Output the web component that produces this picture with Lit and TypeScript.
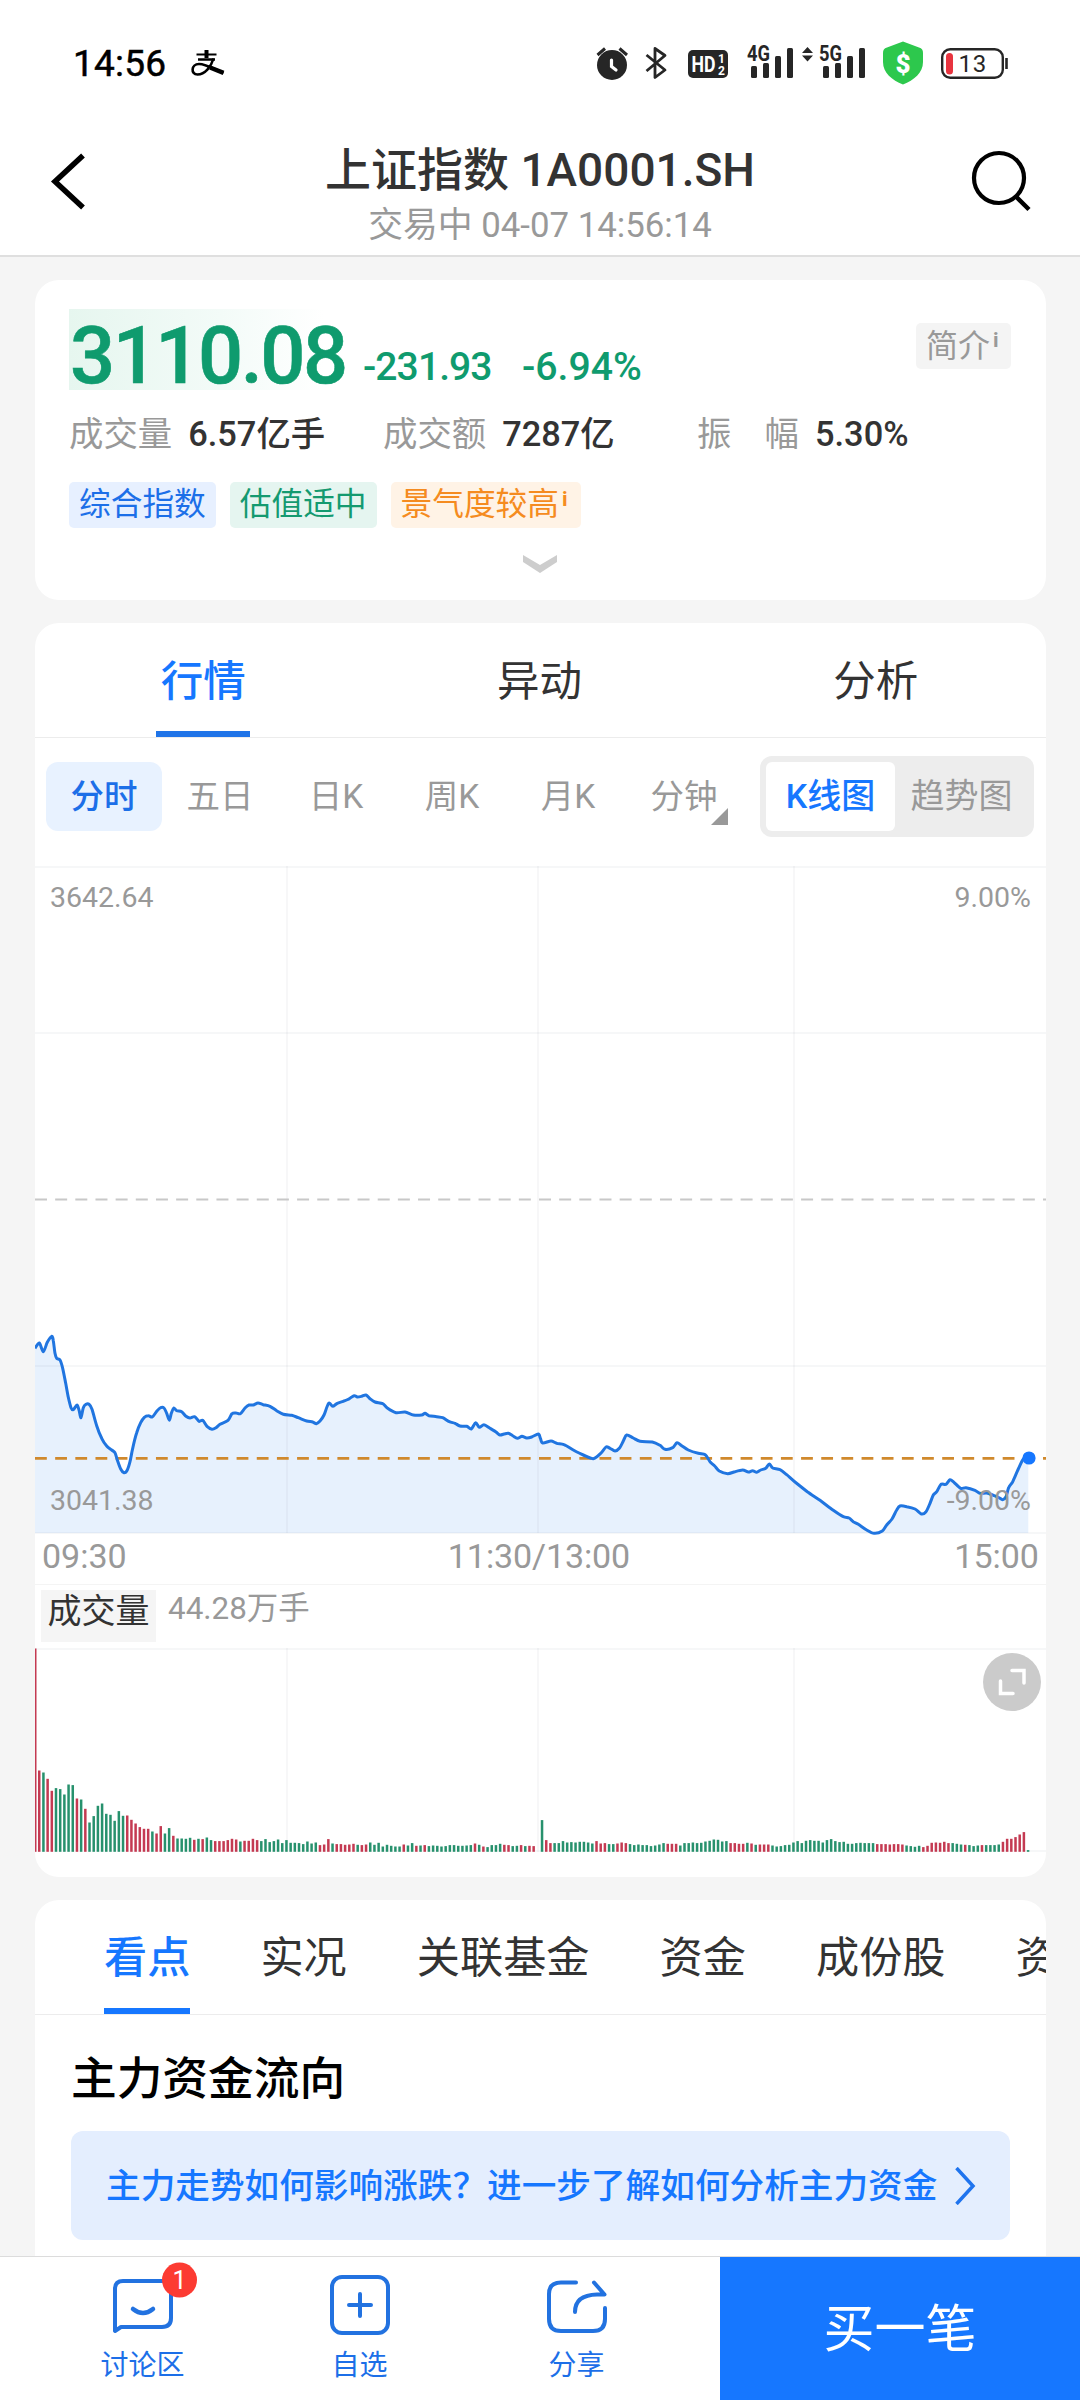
import { LitElement, html, svg, css } from "lit";
import { customElement } from "lit/decorators.js";
import { classMap } from "lit/directives/class-map.js";

const CHART_W = 1011;
const CHART_H = 667;

// Intraday price samples, three units per pixel, x then y.
const PRICE = `105,115 118,99 130,125 142,97 155,79 160,92 165,130 170,145 180,150 188,175 197,220 205,262 213,293 220,299 231,285 237,300 243,323 250,293 258,283 267,283 276,298 290,347 305,385 320,408 335,420 345,428 352,450 362,477 372,488 382,480 390,455 398,415 410,368 422,338 433,322 445,317 457,321 470,304 482,293 492,294 500,310 508,331 514,310 521,294 530,302 545,305 558,319 570,324 584,320 597,334 608,331 622,350 636,358 648,353 660,343 684,331 696,311 708,309 721,311 735,294 747,285 760,285 774,279 790,284 810,289 830,302 850,313 875,316 895,323 920,333 938,336 949,341 960,333 972,315 986,280 998,289 1012,280 1030,274 1045,268 1062,257 1072,261 1085,259
1098,255 1110,266 1125,276 1148,281 1162,294 1188,308 1215,306 1240,315 1265,315 1275,310 1287,317 1310,320 1328,323 1348,335 1365,340 1380,348 1400,349 1414,357 1427,338 1438,352 1452,344 1470,355 1488,366 1500,375 1512,372 1525,370 1538,377 1552,385 1566,379 1580,384 1595,381 1615,372 1621,384 1628,399 1653,393 1670,400 1692,404 1720,420 1750,435 1780,446 1802,430 1818,411 1830,415 1845,423 1858,415 1870,393 1880,375 1900,384 1920,394 1957,396 1980,406 1995,418 2018,413 2031,398 2045,407 2065,420 2095,430 2116,434 2130,455 2144,468 2158,483
2183,491 2205,485 2228,480 2245,486 2258,482 2270,487 2282,480 2297,475 2308,462 2318,474 2340,479 2360,494 2385,516 2422,545 2460,571 2500,601 2530,620 2547,624 2560,635 2575,643 2600,660 2622,670 2647,663 2660,645 2676,627 2690,600 2700,588 2720,590 2745,597 2764,612 2778,605 2790,580 2800,555 2810,545 2823,523 2838,523 2850,509 2862,517 2882,535 2898,533 2925,541 2940,550 2960,549 2980,556 2995,562 3008,569 3018,560 3026,533 3038,515 3055,477 3070,447 3085,443`
  .split(/\s+/)
  .map((p) => p.split(",").map(Number))
  .map(([x, y]) => [x / 3 - 35, y / 3 + 444]);

// Per-minute volume: direction letter followed by the bar size (three units per pixel).
const VOLUME = `R610 R244 G238 R219 R183 G191 G188 G172 G202 G200 R160 G157 R129 G88 G107 G138 G145 G114 G111 G93 G122 G108 R109 R96 R85 R74 R69 R69 G61 R55 R77 G55 G71 R48 G40 G40 G39 G42 R36 G39 R38 G43 G35 R32 R32 R32 R35 R39 R37 G31 R33 R33 R39 R35 G32 G38 G29 G32 G37 G26
G35 G27 G27 G26 G23 G31 G25 G28 R20 R22 R38 G25 R23 R23 R21 R22 R24 G21 R20 R22 G28 G21 G27 G16 G21 G18 G16 G16 R22 G19 G26 R18 G19 R20 G17 G19 G18 G16 G17 G20 G20 G18 G18 G19 G20 R25 G21 R16 G14 G20 G20 G24 R21 R20 G17 G18 R20 G17 R18 R17
G0 G95 R35 R26 G26 G26 G32 G28 G29 G28 G30 G30 G28 G25 R32 R25 R26 G23 G23 R25 R28 R26 G23 G20 G22 G20 G20 G17 G19 G22 G26 R24 R24 R24 G19 G26 G26 G28 G26 G27 G31 G33 G37 G36 G31 G32 R26 R26 R24 R24 G27 R25 G21 R22 R22 R22 G19 G16 G17 G20
G21 G28 G32 G26 G33 G35 G33 G33 G28 G35 G38 G32 G29 G30 G24 G24 G26 G27 G26 G26 G26 R23 R23 R23 R22 R23 R23 R22 G19 G17 G15 G18 R14 R18 R27 R28 R27 R30 R26 G26 G24 G22 R21 G20 G17 G19 R20 G20 G20 G20 G22 R30 R39 R39 R44 R52 R59 G5`
  .split(/\s+/)
  .map((s) => ({ up: s[0] === "R", h: Number(s.slice(1)) / 3 }));

// Smooths the polyline with a low-tension cubic spline.
function smooth(pts: number[][]): string {
  let d = `M${pts[0][0].toFixed(1)} ${pts[0][1].toFixed(1)}`;
  for (let i = 1; i < pts.length; i++) {
    const [x0, y0] = pts[Math.max(i - 2, 0)];
    const [x1, y1] = pts[i - 1];
    const [x2, y2] = pts[i];
    const [x3, y3] = pts[Math.min(i + 1, pts.length - 1)];
    const k = 7;
    d += `C${(x1 + (x2 - x0) / k).toFixed(1)} ${(y1 + (y2 - y0) / k).toFixed(1)} ${(x2 - (x3 - x1) / k).toFixed(1)} ${(y2 - (y3 - y1) / k).toFixed(1)} ${x2.toFixed(1)} ${y2.toFixed(1)}`;
  }
  return d;
}

const FONT = css`
  :host {
    display: block;
    font-family: Roboto, "Noto Sans CJK SC", sans-serif;
  }
  * {
    box-sizing: border-box;
  }
  svg {
    display: block;
    flex: none;
  }
`;

@customElement("status-bar")
class StatusBar extends LitElement {
  static styles = [
    FONT,
    css`
      .bar {
        display: flex;
        height: 126px;
        padding: 0 70px 0 73px;
        align-items: center;
      }
      .time {
        font-size: 37px;
        font-weight: 400;
        -webkit-text-stroke: 0.500px #000;
        color: #000;
        line-height: 40px;
        letter-spacing: 0.200px;
        width: 93px;
        padding-top: 1px;
      }
      .pay {
        margin-left: 25px;
      }
      .icons {
        margin-left: auto;
        display: flex;
        align-items: center;
      }
      text {
        font-family: Roboto, sans-serif;
      }
    `,
  ];

  private signal(label: string) {
    return svg`
      <text x="0" y="20" font-size="21.500" font-weight="700" textLength="23" lengthAdjust="spacingAndGlyphs" fill="#262626">${label}</text>
      <rect x="4" y="25" width="6" height="12" rx="1.500" fill="#262626"></rect>
      <rect x="16" y="22" width="6" height="15" rx="1.500" fill="#262626"></rect>
      <rect x="28" y="15" width="6" height="22" rx="1.500" fill="#262626"></rect>
      <rect x="40" y="7" width="6" height="30" rx="1.500" fill="#262626"></rect>`;
  }

  render() {
    return html`
      <div class="bar">
        <span class="time">14:56</span>
        <svg class="pay" width="34" height="28" viewBox="0 0 34 28" fill="none" stroke="#000">
          <path d="M5.500 5.500H25.500" stroke-width="2"></path>
          <path d="M15.500 1V9" stroke-width="4"></path>
          <path d="M7 10.500H24" stroke-width="2.500"></path>
          <path d="M22.500 9.500C20 18 14 25.500 6.500 25.500C-0.500 25.500 0 15 8 15C15 15 24 20.500 32.500 24" stroke-width="2.600"></path>
          <path d="M19 18.500L32.500 23.800" stroke-width="4.500"></path>
        </svg>
        <div class="icons">
          <svg width="34" height="44" viewBox="596 40 34 44">
            <circle cx="612" cy="64" r="15" fill="#262626"></circle>
            <path d="M597.500 54L605 47.500M627 54L619.500 47.500" stroke="#262626" stroke-width="3" fill="none"></path>
            <path d="M611.500 59V65.500L616 69" stroke="#fff" stroke-width="3.200" fill="none" stroke-linecap="round"></path>
          </svg>
          <svg width="58" height="44" viewBox="630 40 58 44">
            <path d="M646.500 54L665 69L655 76.500V47.500L665 54.500L646.500 70" fill="none" stroke="#262626" stroke-width="2.800" stroke-linejoin="round"></path>
          </svg>
          <svg width="59" height="44" viewBox="688 40 59 44">
            <rect x="688" y="49" width="40" height="28" rx="5" fill="#262626"></rect>
            <text x="691.500" y="71" font-size="22.500" font-weight="700" fill="#fff" textLength="24" lengthAdjust="spacingAndGlyphs">HD</text>
            <text x="718" y="61.500" font-size="12" font-weight="700" fill="#fff">1</text>
            <text x="718" y="74" font-size="12" font-weight="700" fill="#fff">2</text>
          </svg>
          <svg width="50" height="44" viewBox="0 0 50 44">${this.signal("4G")}</svg>
          <svg width="86" height="44" viewBox="-22 0 86 44">
            ${this.signal("5G")}
            <path d="M-17 12L-11.500 6L-6 12ZM-17 14.500L-11.500 20.500L-6 14.500Z" fill="#262626"></path>
          </svg>
          <svg width="58" height="44" viewBox="883 40 58 44">
            <path d="M903 40.500L919 46.500C922 47.500 923 49 923 52V61C923 72 914 79 903 83.500C892 79 883 72 883 61V52C883 49 884 47.500 887 46.500Z" fill="#2dc84d"></path>
            <text x="903" y="71.500" text-anchor="middle" font-size="26" font-weight="900" fill="#fff">$</text>
          </svg>
          <svg width="69" height="44" viewBox="941 40 69 44">
            <rect x="942.200" y="48.200" width="60.600" height="28.600" rx="8" fill="none" stroke="#262626" stroke-width="2.400"></rect>
            <rect x="946" y="52" width="7" height="21.500" rx="3.500" fill="#e8343f"></rect>
            <text x="958.500" y="71" font-size="24" letter-spacing="0.800" fill="#262626">13</text>
            <path d="M1006.500 57V68" stroke="#262626" stroke-width="2.600"></path>
          </svg>
        </div>
      </div>
    `;
  }
}

@customElement("title-bar")
class TitleBar extends LitElement {
  static styles = [
    FONT,
    css`
      .bar {
        display: flex;
        height: 131px;
        padding: 14px 48px 0;
        justify-content: space-between;
        border-bottom: 2px solid #dfdfdf;
      }
      .mid {
        text-align: center;
      }
      .name {
        margin-top: 3px;
        font-size: 46px;
        line-height: 54px;
        font-weight: 500;
        color: #333;
      }
      .state {
        margin-top: 8px;
        font-size: 34.800px;
        line-height: 40px;
        color: #999;
      }
      .icon {
        margin-top: 10px;
      }
    `,
  ];

  render() {
    return html`
      <div class="bar">
        <svg class="icon" width="62" height="64" viewBox="48 150 62 64">
          <path d="M83 155.500L55 181.500L83 207.500" fill="none" stroke="#000" stroke-width="5.500"></path>
        </svg>
        <div class="mid">
          <div class="name">上证指数 1A0001.SH</div>
          <div class="state">交易中 04-07 14:56:14</div>
        </div>
        <svg class="icon" width="62" height="64" viewBox="970 150 62 64">
          <circle cx="999" cy="178" r="25" fill="none" stroke="#000" stroke-width="4.200"></circle>
          <path d="M1016.500 197L1029 209.500" stroke="#000" stroke-width="4.500"></path>
        </svg>
      </div>
    `;
  }
}

@customElement("quote-card")
class QuoteCard extends LitElement {
  static styles = [
    FONT,
    css`
      .card {
        height: 320px;
        margin: 23px 34px 0 35px;
        padding: 29px 35px 0 34px;
        border-radius: 24px;
        background: #fff;
      }
      .top {
        display: flex;
        height: 81px;
        color: #0f9b6e;
        font-weight: 500;
      }
      .price {
        width: 277px;
        padding-left: 1px;
        background: linear-gradient(90deg, #e6f6ef 0%, #f3fbf8 55%, #ffffff 92%);
        font-size: 79.500px;
        line-height: 93px;
        letter-spacing: -2.500px;
        font-weight: 500;
        -webkit-text-stroke: 0.600px #0f9b6e;
        white-space: nowrap;
      }
      .delta {
        margin: 33px 0 0 17px;
        font-size: 39px;
        line-height: 50px;
        width: 127px;
        letter-spacing: -0.900px;
        white-space: nowrap;
      }
      .pct {
        margin: 33px 0 0 32px;
        font-size: 39.200px;
        line-height: 50px;
      }
      .intro {
        margin: 14px 0 0 auto;
        width: 95px;
        height: 46px;
        padding-left: 10px;
        border-radius: 5px;
        background: #f4f4f4;
        color: #999;
        font-weight: 400;
        font-size: 32px;
        line-height: 46px;
        display: flex;
      }
      .mark {
        font-size: 21px;
        font-weight: 700;
        line-height: 34px;
        margin-left: 3px;
      }
      .stats {
        display: flex;
        margin-top: 19px;
        height: 50px;
        font-size: 34.400px;
        line-height: 50px;
        color: #333;
        font-weight: 500;
      }
      .stat {
        display: flex;
        gap: 16px;
        white-space: nowrap;
      }
      .first {
        width: 314px;
      }
      .second {
        width: 314px;
      }
      .label {
        color: #999;
        font-weight: 400;
      }
      .wide {
        display: flex;
        width: 102px;
        justify-content: space-between;
      }
      .tags {
        display: flex;
        gap: 14px;
        margin-top: 23px;
      }
      .tag {
        display: flex;
        height: 46px;
        padding: 0 10px;
        border-radius: 5px;
        font-size: 31.700px;
        line-height: 45px;
      }
      .orange .mark {
        width: 9px;
      }
      .blue {
        background: #e7f0ff;
        color: #1c6fe8;
      }
      .green {
        background: #e5f5f0;
        color: #149a70;
      }
      .orange {
        background: #fff3e6;
        color: #f58b20;
      }
      .more {
        margin: 27px auto 0;
      }
    `,
  ];

  render() {
    return html`
      <div class="card">
        <div class="top">
          <div class="price">3110.08</div>
          <div class="delta">-231.93</div>
          <div class="pct">-6.94%</div>
          <div class="intro">简介<span class="mark">i</span></div>
        </div>
        <div class="stats">
          <div class="stat first"><span class="label">成交量</span><span>6.57亿手</span></div>
          <div class="stat second"><span class="label">成交额</span><span>7287亿</span></div>
          <div class="stat"><span class="label wide"><span>振</span><span>幅</span></span><span>5.30%</span></div>
        </div>
        <div class="tags">
          <div class="tag blue">综合指数</div>
          <div class="tag green">估值适中</div>
          <div class="tag orange">景气度较高<span class="mark">i</span></div>
        </div>
        <svg class="more" width="34" height="18" viewBox="0 0 34 18">
          <path d="M0 0L17 10L34 0V7L17 18L0 7Z" fill="#cdcdcd"></path>
        </svg>
      </div>
    `;
  }
}

@customElement("market-card")
class MarketCard extends LitElement {
  static styles = [
    FONT,
    css`
      .card {
        height: 1254px;
        margin: 23px 34px 0 35px;
        border-radius: 24px;
        background: #fff;
        overflow: hidden;
      }
      .tabs {
        display: flex;
        height: 115px;
        padding-right: 2px;
        border-bottom: 1px solid #ececec;
      }
      .tab {
        flex: 1;
        display: flex;
        flex-direction: column;
        align-items: center;
        justify-content: space-between;
        font-size: 42.500px;
        line-height: 60px;
        padding-top: 29px;
        color: #333;
      }
      .tab::after {
        content: "";
        width: 94px;
        height: 6px;
      }
      .tab.on {
        color: #1677ff;
        font-weight: 500;
      }
      .tab.on::after {
        background: #1f74e8;
      }
      .tools {
        display: flex;
        height: 128px;
        padding: 18px 12px 0 11px;
      }
      .period {
        position: relative;
        width: 116px;
        height: 69px;
        margin-top: 6px;
        text-align: center;
        font-size: 33.500px;
        line-height: 69px;
        color: #999;
        border-radius: 12px;
      }
      .period.on {
        background: #e8f2ff;
        color: #1c6fe8;
        font-weight: 500;
      }
      .corner {
        position: absolute;
        right: 14px;
        bottom: 6px;
      }
      .switch {
        display: flex;
        margin-left: auto;
        width: 274px;
        height: 81px;
        padding: 6px;
        border-radius: 12px;
        background: #ededed;
        font-size: 34px;
        line-height: 69px;
        text-align: center;
        color: #999;
      }
      .mode {
        flex: 1;
        white-space: nowrap;
      }
      .mode.on {
        flex: none;
        width: 129px;
        height: 69px;
        border-radius: 6px;
        background: #fff;
        color: #1677ff;
        font-weight: 500;
      }
      .chart {
        position: relative;
        height: 667px;
      }
      .over {
        position: absolute;
        font-size: 28.500px;
        line-height: 32px;
        color: #999;
      }
      .tl {
        left: 15px;
        top: 16px;
      }
      .tr {
        right: 15px;
        top: 16px;
      }
      .bl {
        left: 15px;
        bottom: 16px;
      }
      .br {
        right: 15px;
        bottom: 16px;
      }
      .axis {
        display: flex;
        justify-content: space-between;
        height: 52px;
        padding: 0 7px;
        font-size: 34px;
        line-height: 47px;
        color: #999;
        border-bottom: 1px solid #f4f4f4;
      }
      .mid {
        margin-right: 3px;
        letter-spacing: -0.100px;
      }
      .head {
        display: flex;
        height: 63px;
        padding: 5px 0 0 6px;
      }
      .kind {
        width: 115px;
        height: 52px;
        background: #f5f5f5;
        color: #333;
        font-size: 34px;
        line-height: 42px;
        text-align: center;
      }
      .amount {
        margin-left: 12px;
        font-size: 31.400px;
        line-height: 37px;
        color: #999;
      }
      .volume {
        position: relative;
        height: 205px;
      }
      .full {
        position: absolute;
        right: 5px;
        top: 5px;
      }
    `,
  ];

  private grid(h: number, rows: number[]) {
    return svg`
      ${[252, 503, 759].map((x) => svg`<path d="M${x} 0V${h}" stroke="#5a6a7a" stroke-opacity=".05" stroke-width="2"></path>`)}
      ${rows.map((y) => svg`<path d="M0 ${y}H${CHART_W}" stroke="#5a6a7a" stroke-opacity=".055" stroke-width="2"></path>`)}`;
  }

  render() {
    const line = smooth(PRICE);
    const periods = ["分时", "五日", "日K", "周K", "月K", "分钟"];
    return html`
      <div class="card">
        <div class="tabs">
          ${["行情", "异动", "分析"].map((t, i) => html`<div class=${classMap({ tab: true, on: i === 0 })}>${t}</div>`)}
        </div>
        <div class="tools">
          ${periods.map(
            (p, i) => html`<div class=${classMap({ period: true, on: i === 0 })}>
              ${p}${i === 5
                ? html`<svg class="corner" width="17" height="17" viewBox="0 0 17 17"><path d="M17 0V17H0Z" fill="#999"></path></svg>`
                : ""}
            </div>`
          )}
          <div class="switch">
            <div class="mode on">K线图</div>
            <div class="mode">趋势图</div>
          </div>
        </div>
        <div class="chart">
          <svg width=${CHART_W} height="671" viewBox="0 0 ${CHART_W} 671">
            <path d="${line}V${CHART_H}H0Z" fill="#e7f1fd"></path>
            ${this.grid(CHART_H, [1, 167, 500, 667])}
            <path d="M0 333.500H${CHART_W}" stroke="#c8c8c8" stroke-width="2.200" stroke-dasharray="12 8.160"></path>
            <path d="M0 592.300H${CHART_W}" stroke="#d0892c" stroke-width="2.800" stroke-dasharray="11.800 8.360"></path>
            <path d=${line} fill="none" stroke="#2075e0" stroke-width="3" stroke-linejoin="round"></path>
            <circle cx="994" cy="592" r="6.600" fill="#1677ff"></circle>
          </svg>
          <span class="over tl">3642.64</span>
          <span class="over tr">9.00%</span>
          <span class="over bl">3041.38</span>
          <span class="over br">-9.00%</span>
        </div>
        <div class="axis"><span>09:30</span><span class="mid">11:30/13:00</span><span>15:00</span></div>
        <div class="head">
          <span class="kind">成交量</span>
          <span class="amount">44.28万手</span>
        </div>
        <div class="volume">
          <svg width=${CHART_W} height="205" viewBox="0 0 ${CHART_W} 205">
            ${this.grid(204, [1, 203])}
            ${VOLUME.map(
              (v, i) =>
                svg`<rect x=${Math.max(0, i * 4.19 - 1.2).toFixed(2)} y=${(203.8 - v.h).toFixed(1)} width=${i ? 2.5 : 1.5} height=${v.h.toFixed(1)} fill=${v.up ? "#c43a52" : "#27916d"}></rect>`
            )}
          </svg>
          <svg class="full" width="58" height="58" viewBox="0 0 58 58">
            <circle cx="29" cy="29" r="29" fill="#cbcbcb"></circle>
            <path d="M29 17.500H41V30M17.500 28V40.500H30" fill="none" stroke="#fff" stroke-width="3.500" stroke-linecap="round"></path>
          </svg>
        </div>
      </div>
    `;
  }
}

@customElement("insight-card")
class InsightCard extends LitElement {
  static styles = [
    FONT,
    css`
      .card {
        height: 400px;
        margin: 23px 34px 0 35px;
        border-radius: 24px 24px 0 0;
        background: #fff;
        overflow: hidden;
      }
      .tabs {
        display: flex;
        gap: 70px;
        height: 115px;
        padding-left: 69px;
        border-bottom: 1px solid #ececec;
      }
      .tab {
        flex: none;
        padding-top: 29px;
        height: 114px;
        font-size: 43.200px;
        line-height: 60px;
        color: #333;
        white-space: nowrap;
      }
      .tab.on {
        color: #1677ff;
        font-weight: 500;
        border-bottom: 6px solid #1677ff;
      }
      .title {
        margin: 34px 0 0 36px;
        font-size: 45.700px;
        line-height: 62px;
        font-weight: 500;
        color: #000;
      }
      .link {
        display: flex;
        align-items: center;
        justify-content: space-between;
        margin: 20px 36px 0;
        height: 109px;
        padding: 0 34px 0 35px;
        border-radius: 12px;
        background: #e4eefe;
        color: #1677ff;
        font-size: 34.650px;
        line-height: 50px;
        font-weight: 500;
        white-space: nowrap;
      }
    `,
  ];

  render() {
    const tabs = ["看点", "实况", "关联基金", "资金", "成份股", "资讯"];
    return html`
      <div class="card">
        <div class="tabs">
          ${tabs.map((t, i) => html`<div class=${classMap({ tab: true, on: i === 0 })}>${t}</div>`)}
        </div>
        <div class="title">主力资金流向</div>
        <div class="link">
          <span>主力走势如何影响涨跌？进一步了解如何分析主力资金</span>
          <svg width="22" height="38" viewBox="0 0 22 38">
            <path d="M2.500 1L19 19L2.500 37" fill="none" stroke="#1f74ee" stroke-width="3.500"></path>
          </svg>
        </div>
      </div>
    `;
  }
}

@customElement("action-bar")
class ActionBar extends LitElement {
  static styles = [
    FONT,
    css`
      .bar {
        display: flex;
        height: 144px;
        background: #fff;
        border-top: 1px solid #dcdcdc;
      }
      .items {
        display: flex;
        width: 720px;
        padding: 0 35px 0 34px;
      }
      .item {
        flex: 1;
        display: flex;
        flex-direction: column;
        align-items: center;
        font-size: 28px;
        line-height: 40px;
        color: #1c6fe8;
      }
      .item svg {
        margin-bottom: 7px;
      }
      text {
        font-family: Roboto, sans-serif;
      }
      .buy {
        flex: 1;
        background: #1677ff;
        color: #fff;
        font-size: 51px;
        line-height: 146px;
        text-align: center;
      }
    `,
  ];

  render() {
    return html`
      <div class="bar">
        <div class="items">
          <div class="item">
            <svg width="110" height="82" viewBox="88 2257 110 82" fill="none" stroke="#2272e0" stroke-width="4" stroke-linejoin="round" stroke-linecap="round">
              <path d="M115 2331V2289Q115 2281 123 2281H162Q171 2281 171 2290V2318Q171 2327 162 2327H121Z"></path>
              <path d="M133 2309Q143 2317 153 2309" stroke-width="4.500"></path>
              <circle cx="179.500" cy="2280" r="17.500" fill="#fc3b32" stroke="none"></circle>
              <text x="179.500" y="2289" text-anchor="middle" font-size="25" fill="#fff" stroke="none">1</text>
            </svg>
            <span>讨论区</span>
          </div>
          <div class="item">
            <svg width="110" height="82" viewBox="305 2257 110 82" fill="none" stroke="#2272e0" stroke-width="4" stroke-linecap="round">
              <rect x="332" y="2277" width="56" height="56" rx="10"></rect>
              <path d="M349 2305H371M360 2294V2316"></path>
            </svg>
            <span>自选</span>
          </div>
          <div class="item">
            <svg width="110" height="82" viewBox="522 2257 110 82" fill="none" stroke="#2272e0" stroke-width="4" stroke-linejoin="round" stroke-linecap="round">
              <path d="M576 2282.500H561Q549 2282.500 549 2294V2319Q549 2331 561 2331H593Q605 2331 605 2319V2308"></path>
              <path d="M594 2282.500L604.500 2294.500H597Q575 2295 575 2312"></path>
            </svg>
            <span>分享</span>
          </div>
        </div>
        <div class="buy">买一笔</div>
      </div>
    `;
  }
}

@customElement("app-root")
class AppRoot extends LitElement {
  static styles = [
    FONT,
    css`
      .page {
        display: flex;
        flex-direction: column;
        width: 1080px;
        height: 2400px;
        background: #f5f5f5;
        overflow: hidden;
      }
      .top {
        flex: none;
        background: #fff;
      }
      .body {
        flex: 1;
        min-height: 0;
        overflow: hidden;
        display: flow-root;
      }
      .foot {
        flex: none;
      }
    `,
  ];

  render() {
    return html`
      <div class="page">
        <header class="top">
          <status-bar></status-bar>
          <title-bar></title-bar>
        </header>
        <main class="body">
          <quote-card></quote-card>
          <market-card></market-card>
          <insight-card></insight-card>
        </main>
        <action-bar class="foot"></action-bar>
      </div>
    `;
  }
}
